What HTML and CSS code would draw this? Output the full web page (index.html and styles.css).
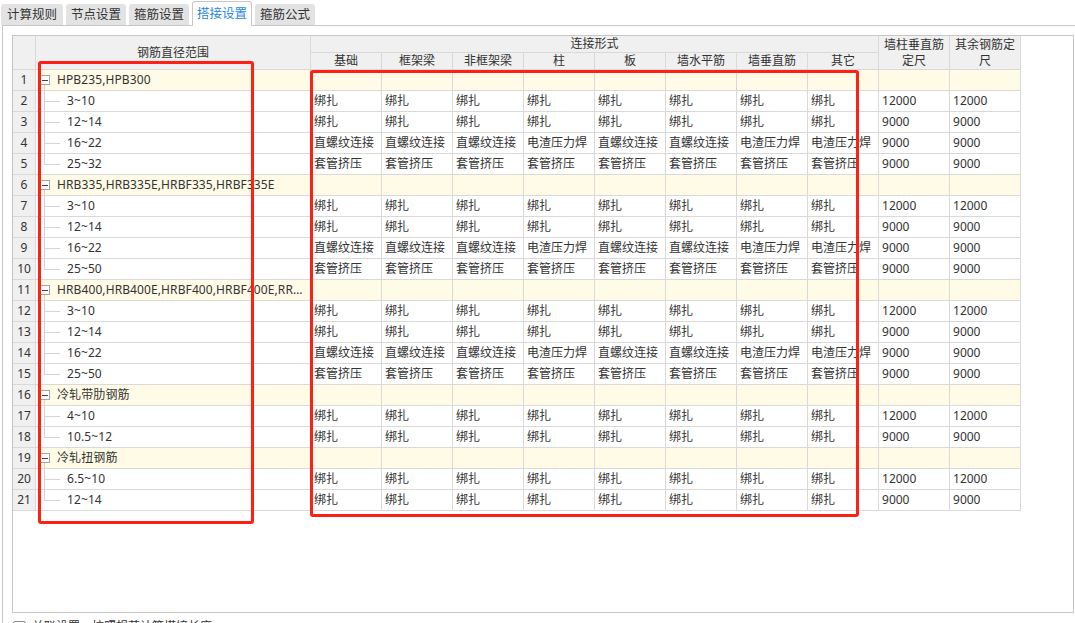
FILE: index.html
```html
<!DOCTYPE html>
<html lang="zh-CN">
<head>
<meta charset="utf-8">
<title>搭接设置</title>
<link rel="stylesheet" href="styles.css">
</head>
<body>
<div class="tabs">
  <div class="tab tab-first">计算规则</div>
  <div class="tab">节点设置</div>
  <div class="tab">箍筋设置</div>
  <div class="tab tab-active">搭接设置</div>
  <div class="tab">箍筋公式</div>
</div>
<div class="panel">
  <div class="frame">
    <table class="grid">
      <colgroup>
        <col class="c-no"><col class="c-tree">
        <col class="c-x"><col class="c-x"><col class="c-x"><col class="c-x"><col class="c-x">
        <col class="c-x"><col class="c-x"><col class="c-x"><col class="c-x"><col class="c-x">
      </colgroup>
      <thead>
        <tr class="h1">
          <th rowspan="2" class="no"></th>
          <th rowspan="2">钢筋直径范围</th>
          <th colspan="8">连接形式</th>
          <th rowspan="2" class="wrap">墙柱垂直筋定尺</th>
          <th rowspan="2" class="wrap">其余钢筋定尺</th>
        </tr>
        <tr class="h2">
          <th>基础</th><th>框架梁</th><th>非框架梁</th><th>柱</th><th>板</th><th>墙水平筋</th><th>墙垂直筋</th><th>其它</th>
        </tr>
      </thead>
      <tbody>
        <tr class="group"><td class="no">1</td><td class="tree"><span class="toggle"></span>HPB235,HPB300</td><td></td><td></td><td></td><td></td><td></td><td></td><td></td><td></td><td></td><td></td></tr>
        <tr><td class="no">2</td><td class="tree leaf">3~10</td><td>绑扎</td><td>绑扎</td><td>绑扎</td><td>绑扎</td><td>绑扎</td><td>绑扎</td><td>绑扎</td><td>绑扎</td><td>12000</td><td>12000</td></tr>
        <tr><td class="no">3</td><td class="tree leaf">12~14</td><td>绑扎</td><td>绑扎</td><td>绑扎</td><td>绑扎</td><td>绑扎</td><td>绑扎</td><td>绑扎</td><td>绑扎</td><td>9000</td><td>9000</td></tr>
        <tr><td class="no">4</td><td class="tree leaf">16~22</td><td>直螺纹连接</td><td>直螺纹连接</td><td>直螺纹连接</td><td>电渣压力焊</td><td>直螺纹连接</td><td>直螺纹连接</td><td>电渣压力焊</td><td>电渣压力焊</td><td>9000</td><td>9000</td></tr>
        <tr><td class="no">5</td><td class="tree leaf last">25~32</td><td>套管挤压</td><td>套管挤压</td><td>套管挤压</td><td>套管挤压</td><td>套管挤压</td><td>套管挤压</td><td>套管挤压</td><td>套管挤压</td><td>9000</td><td>9000</td></tr>

        <tr class="group"><td class="no">6</td><td class="tree"><span class="toggle"></span>HRB335,HRB335E,HRBF335,HRBF335E</td><td></td><td></td><td></td><td></td><td></td><td></td><td></td><td></td><td></td><td></td></tr>
        <tr><td class="no">7</td><td class="tree leaf">3~10</td><td>绑扎</td><td>绑扎</td><td>绑扎</td><td>绑扎</td><td>绑扎</td><td>绑扎</td><td>绑扎</td><td>绑扎</td><td>12000</td><td>12000</td></tr>
        <tr><td class="no">8</td><td class="tree leaf">12~14</td><td>绑扎</td><td>绑扎</td><td>绑扎</td><td>绑扎</td><td>绑扎</td><td>绑扎</td><td>绑扎</td><td>绑扎</td><td>9000</td><td>9000</td></tr>
        <tr><td class="no">9</td><td class="tree leaf">16~22</td><td>直螺纹连接</td><td>直螺纹连接</td><td>直螺纹连接</td><td>电渣压力焊</td><td>直螺纹连接</td><td>直螺纹连接</td><td>电渣压力焊</td><td>电渣压力焊</td><td>9000</td><td>9000</td></tr>
        <tr><td class="no">10</td><td class="tree leaf last">25~50</td><td>套管挤压</td><td>套管挤压</td><td>套管挤压</td><td>套管挤压</td><td>套管挤压</td><td>套管挤压</td><td>套管挤压</td><td>套管挤压</td><td>9000</td><td>9000</td></tr>

        <tr class="group"><td class="no">11</td><td class="tree"><span class="toggle"></span>HRB400,HRB400E,HRBF400,HRBF400E,RRB400</td><td></td><td></td><td></td><td></td><td></td><td></td><td></td><td></td><td></td><td></td></tr>
        <tr><td class="no">12</td><td class="tree leaf">3~10</td><td>绑扎</td><td>绑扎</td><td>绑扎</td><td>绑扎</td><td>绑扎</td><td>绑扎</td><td>绑扎</td><td>绑扎</td><td>12000</td><td>12000</td></tr>
        <tr><td class="no">13</td><td class="tree leaf">12~14</td><td>绑扎</td><td>绑扎</td><td>绑扎</td><td>绑扎</td><td>绑扎</td><td>绑扎</td><td>绑扎</td><td>绑扎</td><td>9000</td><td>9000</td></tr>
        <tr><td class="no">14</td><td class="tree leaf">16~22</td><td>直螺纹连接</td><td>直螺纹连接</td><td>直螺纹连接</td><td>电渣压力焊</td><td>直螺纹连接</td><td>直螺纹连接</td><td>电渣压力焊</td><td>电渣压力焊</td><td>9000</td><td>9000</td></tr>
        <tr><td class="no">15</td><td class="tree leaf last">25~50</td><td>套管挤压</td><td>套管挤压</td><td>套管挤压</td><td>套管挤压</td><td>套管挤压</td><td>套管挤压</td><td>套管挤压</td><td>套管挤压</td><td>9000</td><td>9000</td></tr>

        <tr class="group"><td class="no">16</td><td class="tree"><span class="toggle"></span>冷轧带肋钢筋</td><td></td><td></td><td></td><td></td><td></td><td></td><td></td><td></td><td></td><td></td></tr>
        <tr><td class="no">17</td><td class="tree leaf">4~10</td><td>绑扎</td><td>绑扎</td><td>绑扎</td><td>绑扎</td><td>绑扎</td><td>绑扎</td><td>绑扎</td><td>绑扎</td><td>12000</td><td>12000</td></tr>
        <tr><td class="no">18</td><td class="tree leaf last">10.5~12</td><td>绑扎</td><td>绑扎</td><td>绑扎</td><td>绑扎</td><td>绑扎</td><td>绑扎</td><td>绑扎</td><td>绑扎</td><td>9000</td><td>9000</td></tr>

        <tr class="group"><td class="no">19</td><td class="tree"><span class="toggle"></span>冷轧扭钢筋</td><td></td><td></td><td></td><td></td><td></td><td></td><td></td><td></td><td></td><td></td></tr>
        <tr><td class="no">20</td><td class="tree leaf">6.5~10</td><td>绑扎</td><td>绑扎</td><td>绑扎</td><td>绑扎</td><td>绑扎</td><td>绑扎</td><td>绑扎</td><td>绑扎</td><td>12000</td><td>12000</td></tr>
        <tr><td class="no">21</td><td class="tree leaf last">12~14</td><td>绑扎</td><td>绑扎</td><td>绑扎</td><td>绑扎</td><td>绑扎</td><td>绑扎</td><td>绑扎</td><td>绑扎</td><td>9000</td><td>9000</td></tr>
      </tbody>
    </table>
  </div>
  <div class="opts">
    <span class="check"></span>
    <span class="opt-text">关联设置：按照规范计算搭接长度</span>
  </div>
</div>
<div class="mark mark-a"></div>
<div class="mark mark-b"></div>
</body>
</html>
```
FILE: styles.css
```css
html, body {
  margin: 0;
  padding: 0;
  background: #ffffff;
  overflow: hidden;
}
body {
  width: 1075px;
  height: 623px;
  font-family: "Noto Sans", "Noto Sans CJK SC", sans-serif;
  font-size: 12px;
  color: #333333;
}

/* tabs */
.tabs {
  display: flex;
  align-items: flex-end;
  gap: 3px;
  height: 25px;
  padding-left: 1px;
}
.tab {
  box-sizing: border-box;
  width: 60px;
  height: 21px;
  line-height: 21px;
  text-align: center;
  background: #e3e3e3;
  border-radius: 3px 3px 0 0;
  font-size: 12.5px;
  color: #333333;
}
.tab-first { width: 62px; }
.tab-active {
  position: relative;
  z-index: 1;
  height: 25px;
  line-height: 24px;
  margin-bottom: -1px;
  background: #ffffff;
  border: 1px solid #c8c8c8;
  border-bottom: none;
  color: #1f87e5;
}

/* panel */
.panel {
  margin-left: 2px;
  border-top: 1px solid #c8c8c8;
  border-left: 1px solid #c8c8c8;
  padding: 9px 0 0 9px;
}
.frame {
  box-sizing: border-box;
  width: 1062px;
  height: 578px;
  border: 1px solid #c6c6c6;
  background: #ffffff;
}

/* grid */
.grid {
  width: 1008px;
  table-layout: fixed;
  border-collapse: separate;
  border-spacing: 0;
}
.c-no { width: 23px; }
.c-tree { width: 275px; }
.c-x { width: 71px; }

.grid th, .grid td {
  box-sizing: border-box;
  border-right: 1px solid #d9d9d9;
  border-bottom: 1px solid #d9d9d9;
  white-space: nowrap;
  overflow: hidden;
  text-overflow: ellipsis;
  font-size: 12px;
  color: #333333;
}
.grid th {
  font-weight: normal;
  background: #f0f0f0;
  text-align: center;
  line-height: 16px;
  padding: 0 1px;
}
.grid th.wrap {
  white-space: normal;
  overflow: hidden;
  text-overflow: clip;
}
.grid td {
  line-height: 20px;
  padding: 0 3px;
  vertical-align: middle;
}
.grid td.no {
  background: #f0f0f0;
  text-align: center;
  padding: 0;
}

.group td { background-color: #fffbe6; }
.group td.no { background-color: #f0f0f0; }

.grid td.tree {
  padding-left: 4px;
  letter-spacing: 0.1px;
}
.group .tree {
  background-image: linear-gradient(#d4d4d4, #d4d4d4);
  background-repeat: no-repeat;
  background-position: 8px 100%;
  background-size: 1px 5px;
}
.toggle {
  display: inline-block;
  box-sizing: border-box;
  width: 10px;
  height: 10px;
  margin-right: 7px;
  vertical-align: -1px;
  border: 1px solid #a6a6a6;
  background: #ffffff linear-gradient(#444444, #444444) center / 6px 1px no-repeat;
}
.grid td.leaf {
  padding-left: 31px;
  background-image: linear-gradient(#d4d4d4, #d4d4d4), linear-gradient(#d4d4d4, #d4d4d4);
  background-repeat: no-repeat;
  background-position: 8px 0, 8px 50%;
  background-size: 1px 100%, 16px 1px;
}
.grid td.leaf.last {
  background-size: 1px 50%, 16px 1px;
}

/* bottom option */
.opts {
  display: flex;
  align-items: center;
  gap: 6px;
  margin-top: 6px;
  padding-left: 1px;
}
.check {
  display: inline-block;
  box-sizing: border-box;
  width: 13px;
  height: 13px;
  border: 1px solid #8a8a8a;
  border-radius: 2px;
  background: #ffffff;
}
.opt-text {
  font-size: 12px;
  line-height: 16px;
  color: #333333;
}

/* annotation boxes drawn over the grid */
.mark {
  position: absolute;
  box-sizing: border-box;
  border: 3px solid #ff2015;
  border-radius: 3px;
  pointer-events: none;
}
.mark-a {
  left: 38px;
  top: 61px;
  width: 216px;
  height: 463px;
}
.mark-b {
  left: 310px;
  top: 70px;
  width: 549px;
  height: 447px;
}
```
